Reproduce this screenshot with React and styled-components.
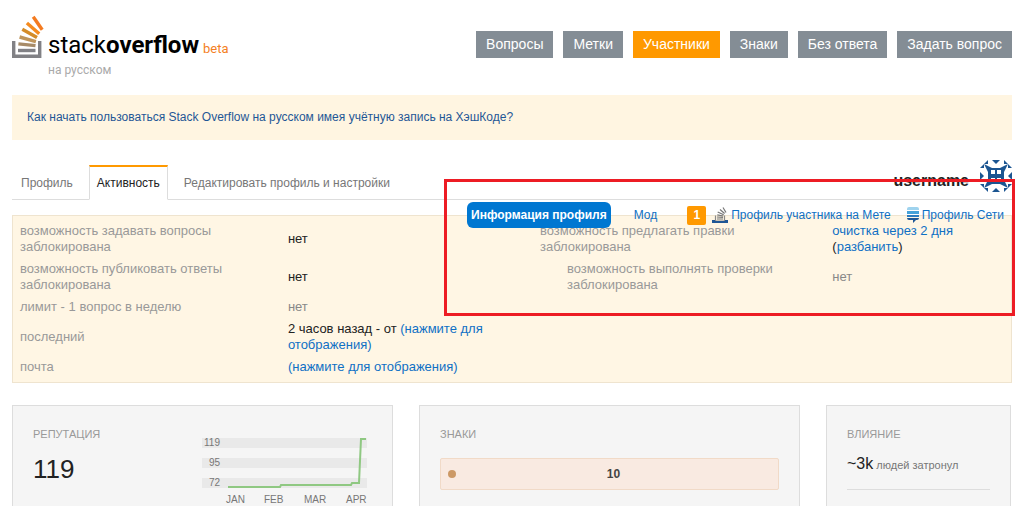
import React from 'react'
import styled, { createGlobalStyle } from 'styled-components'

const navItems = [
    { label: 'Вопросы' },
    { label: 'Метки' },
    { label: 'Участники', active: true },
    { label: 'Знаки' },
    { label: 'Без ответа' },
    { label: 'Задать вопрос' },
]

const tabs = [
    { label: 'Профиль' },
    { label: 'Активность', active: true },
    { label: 'Редактировать профиль и настройки' },
]

const chartRows = [
    { y: 0, label: '119' },
    { y: 20, label: '95' },
    { y: 40, label: '72' },
]

const chartMonths = [
    { x: 24, label: 'JAN' },
    { x: 62, label: 'FEB' },
    { x: 102, label: 'MAR' },
    { x: 144, label: 'APR' },
]

function LogoIcon() {
    return (
        <svg width="30" height="44" viewBox="0 0 30 44" aria-hidden="true">
            <g fill="none" strokeWidth="3.400">
                <path d="M1.700 26v15.200h26V26" stroke="#818185" />
                <path d="M6 35.500h17.500" stroke="#818185" />
                <path d="M6.400 28.900l17.100 1.700" stroke="#a78b68" />
                <path d="M7.600 22l16.300 4.600" stroke="#bf955b" />
                <path d="M10.300 14.300l14.700 8.200" stroke="#d48c28" />
                <path d="M14.900 8l12.300 10.800" stroke="#f58b1f" />
                <path d="M21.200 1.800l9 13" stroke="#f47b20" />
            </g>
        </svg>
    )
}

function MetaIcon() {
    return (
        <svg width="16" height="16" viewBox="0 0 16 16" aria-hidden="true">
            <path d="M3.500 8.500v5.500h9V8.500" fill="none" stroke="#8a8a8a" strokeWidth="1.200" />
            <path d="M5 12h6M5 10l6 .4M5.300 7.800l5.900 1.200M5.700 5l6 2.800M8 2.500l4.600 4M11 .5l3 5" stroke="#777" strokeWidth="1.200" />
            <path d="M0 13h3v1h10v-1h3v3H0z" fill="#1f5796" />
        </svg>
    )
}

function NetworkIcon() {
    return (
        <svg width="12" height="16" viewBox="0 0 12 16" aria-hidden="true">
            <path d="M0 3V2q0-2 2-2h8q2 0 2 2v1z" fill="#9fd3ee" />
            <path d="M0 4h12v3H0z" fill="#46a2d9" />
            <path d="M0 8h12v2H0z" fill="#2c7cc0" />
            <path d="M0 11h12q0 2-2 2H9l-3 3v-3H2q-2 0-2-2z" fill="#1f5796" />
        </svg>
    )
}

function Avatar() {
    return (
        <svg width="32" height="32" viewBox="0 0 32 32" role="img" aria-label="username">
            <g fill="#1b5591">
                <path d="M8 8h16v16H8z" />
                <path d="M12 0h8l-4 4zM12 32h8l-4-4zM0 12v8l4-4zM32 12v8l-4-4z" />
                <path d="M8 0v4H4zM24 0v4h4zM0 8h4V4zM32 8h-4V4zM8 32v-4H4zM24 32v-4h4zM0 24h4v4zM32 24h-4v4z" />
                <path d="M4 4l8 4-4 4zM28 4l-8 4 4 4zM4 28l8-4-4-4zM28 28l-8-4 4-4z" />
            </g>
            <path d="M11 10h4v4h-4zM17 10h4v4h-4zM11 18h4v4h-4zM17 18h4v4h-4z" fill="#fff" />
        </svg>
    )
}

function ReputationChart() {
    return (
        <Chart width="166" height="68" viewBox="0 0 166 68" role="img" aria-label="Репутация по месяцам">
            {chartRows.map(row => (
                <g key={row.label}>
                    <rect x="0" y={row.y} width="165" height="10" fill="#e9e9e9" />
                    <text x="18" y={row.y + 8} textAnchor="end">{row.label}</text>
                </g>
            ))}
            <path d="M26 49h52l1-2h70l1-2h7l2-44h5" fill="none" stroke="#8fc882" strokeWidth="2" />
            {chartMonths.map(month => (
                <text key={month.label} x={month.x} y="65">{month.label}</text>
            ))}
        </Chart>
    )
}

export default function App() {
    return (
        <>
            <GlobalStyle />
            <Page>
                <Header>
                    <Logo href="#">
                        <LogoIcon />
                        <LogoText>
                            <LogoName>stack<b>overflow</b><small>beta</small></LogoName>
                            <LogoSub>на русском</LogoSub>
                        </LogoText>
                    </Logo>
                    <Nav>
                        {navItems.map(item => (
                            <NavLink key={item.label} href="#" $active={item.active}>{item.label}</NavLink>
                        ))}
                    </Nav>
                </Header>

                <Banner>
                    <a href="#">Как начать пользоваться Stack Overflow на русском имея учётную запись на ХэшКоде?</a>
                </Banner>

                <TabBar>
                    {tabs.map(tab => (
                        <Tab key={tab.label} href="#" $active={tab.active}>{tab.label}</Tab>
                    ))}
                    <User>
                        <h1>username</h1>
                        <Avatar />
                    </User>
                </TabBar>

                <ModArea>
                    <ModInfo>
                        <InfoTable>
                            <tbody>
                                <tr>
                                    <th scope="row">возможность задавать вопросы заблокирована</th>
                                    <InfoValue $strong>нет</InfoValue>
                                </tr>
                                <tr>
                                    <th scope="row">возможность публиковать ответы заблокирована</th>
                                    <InfoValue $strong>нет</InfoValue>
                                </tr>
                                <tr>
                                    <th scope="row">лимит - 1 вопрос в неделю</th>
                                    <InfoValue>нет</InfoValue>
                                </tr>
                                <tr>
                                    <th scope="row">последний</th>
                                    <InfoValue $strong>2 часов назад - от <a href="#">(нажмите для отображения)</a></InfoValue>
                                </tr>
                                <tr>
                                    <th scope="row">почта</th>
                                    <InfoValue><a href="#">(нажмите для отображения)</a></InfoValue>
                                </tr>
                            </tbody>
                        </InfoTable>
                        <InfoTable $right>
                            <tbody>
                                <tr>
                                    <th scope="row">возможность предлагать правки заблокирована</th>
                                    <InfoValue $strong><a href="#">очистка через 2 дня</a> (<a href="#">разбанить</a>)</InfoValue>
                                </tr>
                                <tr>
                                    <IndentedLabel scope="row">возможность выполнять проверки заблокирована</IndentedLabel>
                                    <InfoValue>нет</InfoValue>
                                </tr>
                            </tbody>
                        </InfoTable>
                    </ModInfo>
                    <SubNav>
                        <InfoButton type="button">Информация профиля</InfoButton>
                        <SubLink href="#">Мод</SubLink>
                        <MetaGroup>
                            <Flag>1</Flag>
                            <SubLink href="#"><MetaIcon />Профиль участника на Мете</SubLink>
                        </MetaGroup>
                        <SubLink href="#" $spaced><NetworkIcon />Профиль Сети</SubLink>
                    </SubNav>
                    <RedFrame />
                </ModArea>

                <Cards>
                    <Card>
                        <ReputationRow>
                            <div>
                                <h2>Репутация</h2>
                                <Reputation>119</Reputation>
                            </div>
                            <ReputationChart />
                        </ReputationRow>
                    </Card>
                    <Card>
                        <h2>Знаки</h2>
                        <BadgeBar>
                            <BadgeDot />
                            <b>10</b>
                        </BadgeBar>
                    </Card>
                    <Card>
                        <h2>Влияние</h2>
                        <Impact><b>~3k</b> людей затронул</Impact>
                        <ImpactNext>~0</ImpactNext>
                    </Card>
                </Cards>
            </Page>
        </>
    )
}

const GlobalStyle = createGlobalStyle`
    *{
        box-sizing: border-box;
    }
    body{
        margin: 0;
        background: #fff;
        color: #222;
        font-family: "Liberation Sans", Arial, sans-serif;
        font-size: 12px;
    }
    a{
        color: #0f70c4;
        text-decoration: none;
    }
    h1, h2, p{
        margin: 0;
    }
`

const Page = styled.div`
    height: 100vh;
    overflow: hidden;
    padding: 0 3px 0 12px;
`

const Header = styled.header`
    display: flex;
    align-items: flex-start;
    justify-content: space-between;
    height: 95px;
`

const Logo = styled.a`
    display: flex;
    gap: 6px;
    padding-top: 15px;
    svg{
        overflow: visible;
    }
`

const LogoText = styled.span`
    display: flex;
    flex-direction: column;
    padding-top: 17px;
    font-family: Roboto, sans-serif;
`

const LogoName = styled.span`
    color: #000;
    font-size: 24px;
    line-height: 26px;
    b{
        font-weight: 700;
    }
    small{
        margin-left: 4px;
        color: #f48024;
        font-size: 13px;
    }
`

const LogoSub = styled.span`
    color: #aaa;
    font-size: 12px;
    line-height: 16px;
`

const Nav = styled.nav`
    display: flex;
    gap: 10px;
    padding-top: 31px;
`

const NavLink = styled.a`
    padding: 0 10px;
    background: ${props => props.$active ? '#ff9900' : '#848d95'};
    color: #fff;
    font-size: 14px;
    line-height: 27px;
`

const Banner = styled.div`
    padding: 14px 15px 15px;
    background: #fff5e1;
    line-height: 16px;
    a{
        color: #1f5796;
    }
`

const TabBar = styled.div`
    display: flex;
    align-items: flex-end;
    height: 60px;
    padding-left: 1px;
    border-bottom: 1px solid #ddd;
`

const Tab = styled.a`
    height: 35px;
    margin-bottom: -1px;
    margin-right: 8px;
    padding: 0 7px;
    border: 1px solid ${props => props.$active ? '#ddd' : 'transparent'};
    border-top: 2px solid ${props => props.$active ? '#ff9900' : 'transparent'};
    border-bottom-color: ${props => props.$active ? '#fff' : 'transparent'};
    color: ${props => props.$active ? '#222' : '#777'};
    line-height: 32px;
`

const User = styled.div`
    display: flex;
    align-items: center;
    gap: 11px;
    margin-left: auto;
    padding-bottom: 7px;
    h1{
        padding-top: 10px;
        font-size: 16px;
        line-height: 20px;
    }
`

const ModArea = styled.section`
    position: relative;
    padding-top: 15px;
`

const ModInfo = styled.div`
    display: grid;
    grid-template-columns: 520fr 464fr;
    align-items: start;
    padding: 4px 7px;
    border: 1px solid #efe4cf;
    background: #fff6e4;
`

const InfoTable = styled.table`
    width: ${props => props.$right ? '100%' : '92%'};
    border-collapse: collapse;
    table-layout: fixed;
    font-size: 13px;
    line-height: 16px;
    th, td{
        padding: 3px 0;
        text-align: left;
        vertical-align: middle;
    }
    th{
        width: ${props => props.$right ? '63%' : '56%'};
        padding-right: 50px;
        color: #999;
        font-weight: 400;
    }
`

const InfoValue = styled.td`
    color: ${props => props.$strong ? '#222' : '#888'};
`

const IndentedLabel = styled.th`
    && {
        padding-left: 27px;
    }
`

// sits across the upper border of the info panel
const SubNav = styled.div`
    position: absolute;
    top: 2px;
    right: 8px;
    display: flex;
    align-items: center;
    height: 26px;
`

const InfoButton = styled.button`
    height: 26px;
    margin-right: 23px;
    padding: 0 4px;
    border: 0;
    border-radius: 6px;
    background: #0077d1;
    color: #fff;
    font: bold 12px "Liberation Sans", Arial, sans-serif;
`

const SubLink = styled.a`
    display: flex;
    align-items: center;
    gap: 3px;
    margin-left: ${props => props.$spaced ? '16px' : '0'};
`

const MetaGroup = styled.span`
    display: flex;
    align-items: center;
    gap: 6px;
    margin-left: 30px;
`

const Flag = styled.span`
    width: 19px;
    border-radius: 2px;
    background: #ff9900;
    color: #fff;
    font-weight: 700;
    line-height: 19px;
    text-align: center;
`

// highlight drawn over the page
const RedFrame = styled.div`
    position: absolute;
    top: -21px;
    right: -3px;
    width: 571px;
    height: 137px;
    border: 3px solid #ed1c24;
    pointer-events: none;
`

const Cards = styled.div`
    display: grid;
    grid-template-columns: 381fr 381fr 185fr;
    gap: 26px;
    margin-top: 22px;
    padding-right: 1px;
`

const Card = styled.section`
    min-height: 160px;
    padding: 20px;
    border: 1px solid #ddd;
    background: #f5f5f5;
    h2{
        color: #999;
        font-size: 11px;
        font-weight: 400;
        line-height: 16px;
        text-transform: uppercase;
    }
`

const ReputationRow = styled.div`
    display: flex;
    justify-content: space-between;
`

const Reputation = styled.p`
    margin-top: 12px;
    font-size: 26px;
    line-height: 30px;
`

const Chart = styled.svg`
    margin: 12px 4px 0 0;
    overflow: visible;
    fill: #777;
    font-size: 10px;
`

const BadgeBar = styled.div`
    display: flex;
    align-items: center;
    height: 32px;
    margin-top: 16px;
    padding: 0 7px;
    border: 1px solid #f1dac7;
    border-radius: 2px;
    background: #f9eae1;
    b{
        flex: 1;
        color: #444;
        text-align: center;
    }
`

const BadgeDot = styled.span`
    width: 8px;
    height: 8px;
    border-radius: 50%;
    background: #cc9966;
`

const Impact = styled.p`
    padding: 12px 0 14px;
    border-bottom: 1px solid #ddd;
    color: #777;
    font-size: 11px;
    line-height: 20px;
    b{
        color: #222;
        font-size: 16px;
        font-weight: 400;
    }
`

const ImpactNext = styled.p`
    padding-top: 12px;
    line-height: 20px;
`
